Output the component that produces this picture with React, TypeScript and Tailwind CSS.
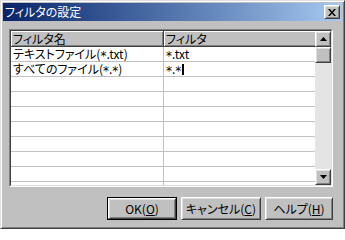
import * as React from "react"

const raised =
  "border border-t-white border-l-white border-r-[#404040] border-b-[#404040] shadow-[inset_1px_1px_#dfdfdf,inset_-1px_-1px_#808080]"

// アスタリスクを中央寄せで描く
function Txt({ s }: { s: string }) {
  const parts = s.split("*")
  return (
    <>
      {parts.map((p, i) => (
        <React.Fragment key={i}>
          {i > 0 && (
            <span className="inline-block translate-y-[2px] font-['DejaVu_Sans',sans-serif] text-[12px]">*</span>
          )}
          {p}
        </React.Fragment>
      ))}
    </>
  )
}

function Arrow({ down }: { down?: boolean }) {
  return (
    <svg width="7" height="4" viewBox="0 0 7 4" className="block">
      {down ? <path d="M0 0h7L3.5 4z" fill="#000" /> : <path d="M0 4h7L3.5 0z" fill="#000" />}
    </svg>
  )
}

function ScrollBox({ children }: { children?: React.ReactNode }) {
  return (
    <div className={`w-[16px] h-[16px] bg-[#c0c0c0] flex items-center justify-center ${raised}`}>
      {children}
    </div>
  )
}

function Button({ label, hot, width, isDefault }: { label: string; hot: string; width: string; isDefault?: boolean }) {
  return (
    <div className={`${width} h-[23px] ${isDefault ? "border border-black" : ""} flex`}>
      <div className={`flex-1 bg-[#c0c0c0] flex items-center justify-center text-[12px] text-black ${raised}`}>
        <span>
          {label}(<span className="underline underline-offset-1">{hot}</span>)
        </span>
      </div>
    </div>
  )
}

const rows: [string, string, boolean][] = [
  ["テキストファイル(*.txt)", "*.txt", false],
  ["すべてのファイル(*.*)", "*.*", true],
  ["", "", false],
  ["", "", false],
  ["", "", false],
  ["", "", false],
  ["", "", false],
  ["", "", false],
  ["", "", false],
  ["", "", false],
]

export default function App() {
  return (
    <div className="w-[345px] h-[229px] bg-[#c0c0c0] border border-t-[#dfdfdf] border-l-[#dfdfdf] border-r-[#404040] border-b-[#404040] shadow-[inset_1px_1px_#fff,inset_-1px_-1px_#808080] p-[2px] flex flex-col font-['Noto_Sans_CJK_JP',sans-serif] [font-feature-settings:'palt'] leading-none select-none">
      {/* タイトルバー */}
      <div className="h-[18px] bg-gradient-to-r from-[#0a246a] to-[#a6caf0] flex items-center pl-[2px] pr-[2px]">
        <span className="flex-1 text-white text-[12px]">フィルタの設定</span>
        <div className={`w-[16px] h-[14px] bg-[#c0c0c0] flex items-center justify-center ${raised}`}>
          <svg width="8" height="7" viewBox="0 0 8 7" className="block">
            <path d="M0 0h2l2 2.5L6 0h2L5 3.5 8 7H6L4 4.5 2 7H0l3-3.5z" fill="#000" />
          </svg>
        </div>
      </div>

      {/* リストビュー */}
      <div className="ml-[6px] mt-[8px] w-[324px] h-[158px] border border-t-[#808080] border-l-[#808080] border-r-white border-b-white">
        <div className="w-full h-full border border-t-[#404040] border-l-[#404040] border-r-[#dfdfdf] border-b-[#dfdfdf] flex bg-white">
          <div className="flex-1 flex flex-col overflow-hidden">
            <div className="flex h-[16px] shrink-0 text-[12px] text-black">
              <div className="w-[153px] bg-[#c0c0c0] border-r border-b border-[#404040] shadow-[inset_1px_1px_#fff,inset_-1px_-1px_#808080] flex items-center pl-[2px]">
                フィルタ名
              </div>
              <div className="flex-1 bg-[#c0c0c0] border-b border-[#404040] shadow-[inset_1px_1px_#fff,inset_0_-1px_#808080] flex items-center pl-[2px]">
                フィルタ
              </div>
            </div>
            {rows.map(([name, filter, editing], i) => (
              <div key={i} className="flex h-[15px] shrink-0 border-b border-[#c0c0c0] text-[12px] text-black">
                <div className="w-[153px] border-r border-[#c0c0c0] flex items-center pl-[2px] whitespace-nowrap">
                  <Txt s={name} />
                </div>
                <div className="flex-1 flex items-center pl-[2px] whitespace-nowrap">
                  <Txt s={filter} />
                  {editing && <span className="ml-[1px] w-[2px] h-[11px] bg-black" />}
                </div>
              </div>
            ))}
          </div>
          {/* スクロールバー */}
          <div className="w-[16px] flex flex-col bg-[#e4e4e4]">
            <ScrollBox>
              <Arrow />
            </ScrollBox>
            <ScrollBox />
            <div className="flex-1" />
            <ScrollBox>
              <Arrow down />
            </ScrollBox>
          </div>
        </div>
      </div>

      {/* ボタン */}
      <div className="mt-[10px] flex justify-end gap-[4px] pr-[9px]">
        <Button label="OK" hot="O" width="w-[70px]" isDefault />
        <Button label="キャンセル" hot="C" width="w-[80px]" />
        <Button label="ヘルプ" hot="H" width="w-[68px]" />
      </div>
    </div>
  )
}
